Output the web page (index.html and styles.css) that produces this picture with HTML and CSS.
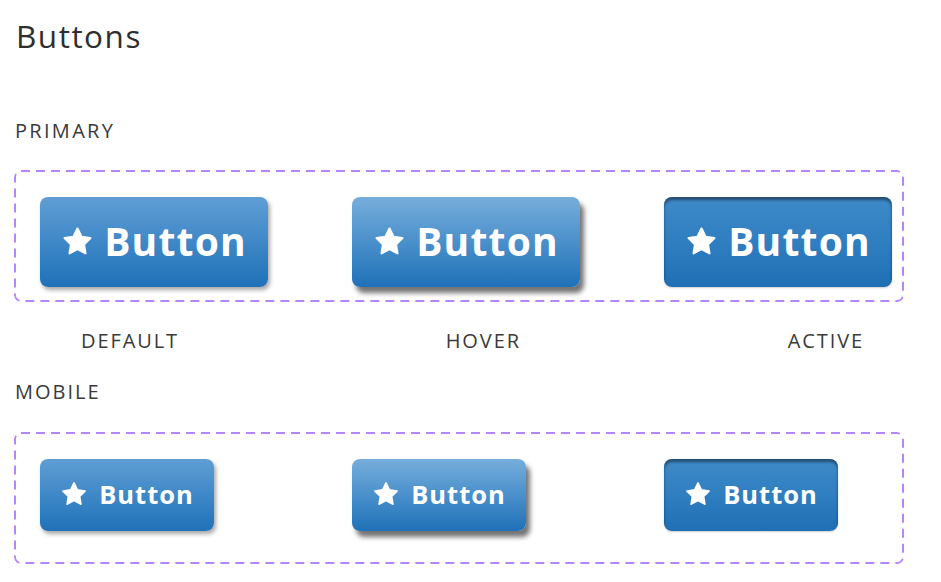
FILE: index.html
```html
<!DOCTYPE html>
<html lang="en">
<head>
<meta charset="utf-8">
<title>Buttons</title>
<link rel="stylesheet" href="styles.css">
</head>
<body>
<main class="page">
  <h1 class="title">Buttons</h1>

  <h2 class="section-label label-primary">PRIMARY</h2>
  <div class="frame frame-primary">
    <button class="btn btn-lg">
      <svg class="star" viewBox="0 0 24 24" aria-hidden="true"><polygon points="12,2.6 14.9,8.6 21.4,9.5 16.7,14.1 17.8,20.6 12,17.5 6.2,20.6 7.3,14.1 2.6,9.5 9.1,8.6"/></svg>
      <span>Button</span>
    </button>
    <button class="btn btn-lg is-hover">
      <svg class="star" viewBox="0 0 24 24" aria-hidden="true"><polygon points="12,2.6 14.9,8.6 21.4,9.5 16.7,14.1 17.8,20.6 12,17.5 6.2,20.6 7.3,14.1 2.6,9.5 9.1,8.6"/></svg>
      <span>Button</span>
    </button>
    <button class="btn btn-lg is-active">
      <svg class="star" viewBox="0 0 24 24" aria-hidden="true"><polygon points="12,2.6 14.9,8.6 21.4,9.5 16.7,14.1 17.8,20.6 12,17.5 6.2,20.6 7.3,14.1 2.6,9.5 9.1,8.6"/></svg>
      <span>Button</span>
    </button>
  </div>

  <div class="state-labels">
    <span>DEFAULT</span>
    <span>HOVER</span>
    <span>ACTIVE</span>
  </div>

  <h2 class="section-label label-mobile">MOBILE</h2>
  <div class="frame frame-mobile">
    <button class="btn btn-sm">
      <svg class="star" viewBox="0 0 24 24" aria-hidden="true"><polygon points="12,2.6 14.9,8.6 21.4,9.5 16.7,14.1 17.8,20.6 12,17.5 6.2,20.6 7.3,14.1 2.6,9.5 9.1,8.6"/></svg>
      <span>Button</span>
    </button>
    <button class="btn btn-sm is-hover">
      <svg class="star" viewBox="0 0 24 24" aria-hidden="true"><polygon points="12,2.6 14.9,8.6 21.4,9.5 16.7,14.1 17.8,20.6 12,17.5 6.2,20.6 7.3,14.1 2.6,9.5 9.1,8.6"/></svg>
      <span>Button</span>
    </button>
    <button class="btn btn-sm is-active">
      <svg class="star" viewBox="0 0 24 24" aria-hidden="true"><polygon points="12,2.6 14.9,8.6 21.4,9.5 16.7,14.1 17.8,20.6 12,17.5 6.2,20.6 7.3,14.1 2.6,9.5 9.1,8.6"/></svg>
      <span>Button</span>
    </button>
  </div>
</main>
</body>
</html>
```

FILE: styles.css
```css
* { box-sizing: border-box; }

html, body {
  margin: 0;
  padding: 0;
  background: #ffffff;
}

body {
  font-family: "Open Sans", "Noto Sans", sans-serif;
  color: #333333;
}

.page {
  width: 941px;
  padding: 0 37px 0 14px;
}

.title {
  margin: 20px 0 0 2px;
  font-size: 31.5px;
  line-height: 31px;
  font-weight: 400;
  letter-spacing: 1.5px;
  color: #2f2f2f;
}

.section-label {
  margin: 0 0 0 1px;
  font-size: 20px;
  line-height: 20px;
  font-weight: 400;
  letter-spacing: 2.3px;
  color: #3a3a3a;
}

.label-primary { margin-top: 70px; }
.label-mobile { margin-top: 31px; letter-spacing: 2px; }

.frame {
  height: 132px;
  border-radius: 7px;
  background-image: url("data:image/svg+xml;utf8,<svg xmlns='http://www.w3.org/2000/svg' width='890' height='132'><rect x='1' y='1' width='888' height='130' rx='6' ry='6' fill='none' stroke='%23b584ff' stroke-width='2' stroke-dasharray='9 6'/></svg>");
  background-repeat: no-repeat;
  display: grid;
  grid-template-columns: 312px 312px auto;
  align-items: start;
  padding: 27px 0 0 26px;
}

.frame-primary { margin-top: 29px; }
.frame-mobile { margin-top: 30px; }

.state-labels {
  display: flex;
  justify-content: space-between;
  margin: 29px 40px 0 67px;
  font-size: 20px;
  line-height: 20px;
  letter-spacing: 1.9px;
  color: #3a3a3a;
}

.btn {
  display: flex;
  align-items: center;
  justify-content: center;
  border: none;
  padding: 0;
  color: #ffffff;
  font-family: "Open Sans", "Noto Sans", sans-serif;
  font-weight: 700;
  background: linear-gradient(180deg, #5f9ed4 0%, #3f88c7 50%, #1f71b8 100%);
  box-shadow: 2px 3px 4px rgba(0, 0, 0, 0.35);
  cursor: pointer;
}

.btn .star {
  fill: #ffffff;
  stroke: #ffffff;
  stroke-width: 1.6;
  stroke-linejoin: round;
  flex: none;
}

.btn-lg {
  width: 228px;
  height: 90px;
  border-radius: 8px;
  gap: 10px;
  font-size: 39px;
  letter-spacing: 1.2px;
}

.btn-lg .star { width: 33px; height: 33px; margin-top: -2px; }
.btn-lg span { margin-top: -3px; }

.btn-sm {
  width: 174px;
  height: 72px;
  border-radius: 8px;
  gap: 11px;
  font-size: 25.5px;
  letter-spacing: 1px;
}

.btn-sm .star { width: 28px; height: 28px; margin-top: -2px; }
.btn-sm span { margin-top: -2px; }

.btn.is-hover {
  background: linear-gradient(180deg, #76aedb 0%, #4a90cb 50%, #1f71b8 100%);
  box-shadow: 4px 6px 5px rgba(0, 0, 0, 0.55);
}

.btn.is-active {
  background: linear-gradient(180deg, #3f8ac8 0%, #2f7ec0 50%, #1f6fb5 100%);
  box-shadow: inset 0 3px 3px rgba(0, 0, 0, 0.45), 0 1px 2px rgba(0, 0, 0, 0.2);
}
```
